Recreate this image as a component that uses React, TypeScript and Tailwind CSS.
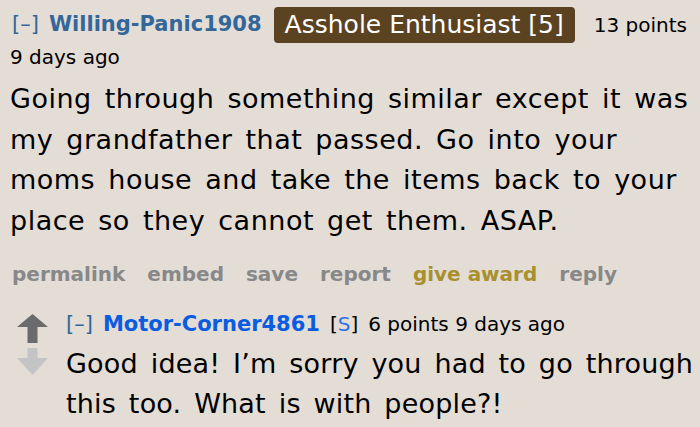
export default function App() {
  return (
    <div className="w-[700px] h-[427px] overflow-hidden bg-[#e3ddd6] text-black font-['DejaVu_Sans',sans-serif]">
      <div className="pl-[10px] pt-[7px]">
        {/* header */}
        <div className="flex items-center h-[36px]">
          <span className="ml-[2px] text-[21px] text-[#336699] mr-[10px]">[–]</span>
          <span className="text-[21px] font-bold text-[#336699]">Willing-Panic1908</span>
          <span className="ml-[12px] h-[36px] px-[11px] flex items-center rounded-[4px] bg-[#5b4220] text-white text-[25px]">
            Asshole Enthusiast [5]
          </span>
          <span className="ml-[19px] text-[20px]">13 points</span>
        </div>
        <div className="text-[20px] leading-[28px]">9 days ago</div>

        {/* body */}
        <p className="mt-[8px] text-[27px] leading-[40.5px] tracking-[0.5px] [word-spacing:4px] pr-[8px]">
          Going through something similar except it was my grandfather that passed. Go into your moms house and take the items back to your place so they cannot get them. ASAP.
        </p>

        {/* actions */}
        <div className="mt-[18px] flex gap-[22px] text-[20px] font-bold text-[#888888]">
          <span className="ml-[2px]">permalink</span>
          <span>embed</span>
          <span>save</span>
          <span>report</span>
          <span className="text-[#a8902f]">give award</span>
          <span>reply</span>
        </div>

        {/* reply */}
        <div className="mt-[20px] flex">
          <div className="w-[56px] flex flex-col items-start pl-[7px] pt-[5px] gap-[5px]">
            <svg width="31" height="29" viewBox="0 0 31 29">
              <path d="M15.5 0 L31 13 L20.5 13 L20.5 29 L10.5 29 L10.5 13 L0 13 Z" fill="#6b6b6b" />
            </svg>
            <svg width="31" height="27" viewBox="0 0 31 27">
              <path d="M10.5 0 L20.5 0 L20.5 10 L31 10 L15.5 27 L0 10 L10.5 10 Z" fill="#c4c4c4" />
            </svg>
          </div>
          <div className="flex-1">
            <div className="flex items-baseline text-[20px] leading-[30px]">
              <span className="text-[21px] text-[#336699] mr-[10px]">[–]</span>
              <span className="text-[21px] font-bold text-[#0a5ce0]">Motor-Corner4861</span>
              <span className="ml-[10px]">[<span className="text-[#2e72e8]">S</span>]</span>
              <span className="ml-[10px]">6 points 9 days ago</span>
            </div>
            <p className="mt-[5px] text-[27px] leading-[40px] tracking-[0.2px] [word-spacing:4px]">
              Good idea! I’m sorry you had to go through this too. What is with people?!
            </p>
          </div>
        </div>
      </div>
    </div>
  );
}
